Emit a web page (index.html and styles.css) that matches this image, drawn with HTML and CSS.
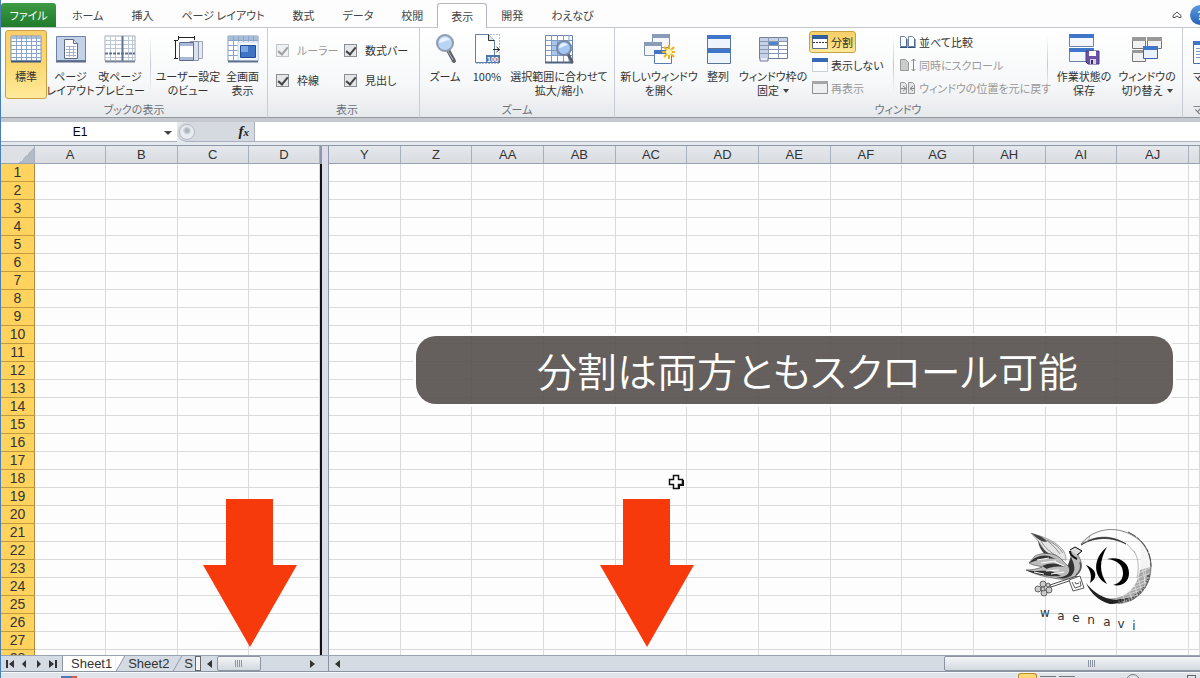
FILE: index.html
```
<!DOCTYPE html>
<html lang="ja">
<head>
  <meta charset="UTF-8" />
  <meta name="viewport" content="width=device-width, initial-scale=1.0"/>
  <title>分割は両方ともスクロール可能</title>
  <link rel="stylesheet" href="styles.css">
</head>
<body>

  <!-- Tabs -->
  <nav class="tabs">
    <button class="tab file">ファイル</button>
    <button class="tab">ホーム</button>
    <button class="tab">挿入</button>
    <button class="tab">ページ レイアウト</button>
    <button class="tab">数式</button>
    <button class="tab">データ</button>
    <button class="tab">校閲</button>
    <button class="tab active">表示</button>
    <button class="tab">開発</button>
    <button class="tab">わえなび</button>
    <div class="tab-tools">
      <button class="tool" aria-label="リボンの最小化">
        <svg width="10" height="8" viewBox="0 0 10 8"><path d="M1 4.500 5 1l4 3.500v2H7L5 5 3 6.500H1z" fill="#fff" stroke="#555" stroke-width="1"/></svg>
      </button>
      <button class="tool help" aria-label="ヘルプ">?</button>
    </div>
  </nav>

  <!-- Ribbon -->
  <div class="ribbon">
    <section class="group book">
      <div class="items">
        <button class="big on">
          <svg class="icon" viewBox="0 0 32 32">
            <path d="M1 3h30v25H1z" fill="#fff" stroke="#7d93b4"/>
            <path d="M1 3h30v3H1z" fill="#a9bcd8"/>
            <path d="M6.500 3v25M11.500 3v25M16.500 3v25M21.500 3v25M26.500 3v25M1 8.500h30M1 12.500h30M1 16.500h30M1 20.500h30M1 24.500h30" stroke="#8ba6cc"/>
            <path d="M1 28.500h30" stroke="#3f557a" stroke-width="2"/>
          </svg>
          <span>標準</span>
        </button>
        <button class="big">
          <svg class="icon" viewBox="0 0 32 32">
            <path d="M1.500 3.500h29v24h-29z" fill="#c3d2e8" stroke="#6c83a8"/>
            <path d="M9.500 6.500h9l4 4v15h-13z" fill="#fff" stroke="#5b6b85"/>
            <path d="M18.500 6.500v4h4" fill="#dfe7f2" stroke="#5b6b85"/>
            <path d="M11 13.500h10M11 16.500h10M11 19.500h10M11 22.500h10M14.500 13v11M18.500 13v11" stroke="#a3b2c9"/>
            <path d="M1 28.500h30" stroke="#5b6b85" stroke-width="2"/>
          </svg>
          <span>ページ<br>レイアウト</span>
        </button>
        <button class="big">
          <svg class="icon" viewBox="0 0 32 32">
            <path d="M1 3h30v25H1z" fill="#fff" stroke="#a2acb9"/>
            <path d="M6.500 3v25M11.500 3v25M24.500 3v25M28.500 3v25M1 7.500h30M1 11.500h30M1 15.500h30M1 24.500h30" stroke="#bcc7d6"/>
            <path d="M18.500 3v25" stroke="#5f7291" stroke-width="2"/>
            <path d="M1 20.500h30" stroke="#5f7291" stroke-width="2" stroke-dasharray="3 1"/>
            <path d="M1 28.500h30" stroke="#7b889c" stroke-width="2"/>
          </svg>
          <span>改ページ<br>プレビュー</span>
        </button>
        <i class="sep"></i>
        <button class="big">
          <svg class="icon" viewBox="0 0 32 32">
            <path d="M22 8.500h8.500v17H22z" fill="#e6ebf3" stroke="#a3aabb"/>
            <path d="M18 8.500h8.500v19H18z" fill="#dbe1ec" stroke="#8d96ab"/>
            <path d="M7.500 9.500h14v18h-14z" fill="#fff" stroke="#5e6c8c"/>
            <path d="M8 10h13v3H8zM8 24h13v3H8z" fill="#a9b8d6"/>
            <path d="M6 4.500h17M6.500 3v4M22.500 3v4M3.500 8v17M2 7.500h4M2 25.500h4" stroke="#222" fill="none"/>
          </svg>
          <span>ユーザー設定<br>のビュー</span>
        </button>
        <button class="big">
          <svg class="icon" viewBox="0 0 32 32">
            <path d="M1 3h30v25H1z" fill="#fff" stroke="#8499bb"/>
            <path d="M1 3h30v4H1z" fill="#a9bcd8"/>
            <path d="M6.500 3v25M11.500 3v25M16.500 3v25M21.500 3v25M26.500 3v25M1 7.500h30M1 12.500h30M1 17.500h30M1 22.500h30" stroke="#8ba6cc"/>
            <path d="M11 9h20v19H11z" fill="#f2f6fb" stroke="#cfd9e8"/>
            <path d="M13.500 12.500h15v12h-15z" fill="#3f73c4" stroke="#234f96"/>
            <path d="M14 13h7v6h-7z" fill="#7ba4e2"/>
            <path d="M1 28.500h30" stroke="#5c7091" stroke-width="2"/>
          </svg>
          <span>全画面<br>表示</span>
        </button>
      </div>
      <h2>ブックの表示</h2>
    </section>

    <section class="group show">
      <div class="items">
        <label class="check off"><input type="checkbox" checked disabled>ルーラー</label>
        <label class="check"><input type="checkbox" checked>数式バー</label>
        <label class="check"><input type="checkbox" checked>枠線</label>
        <label class="check"><input type="checkbox" checked>見出し</label>
      </div>
      <h2>表示</h2>
    </section>

    <section class="group zoom">
      <div class="items">
        <button class="big">
          <svg class="icon" viewBox="0 0 32 32">
            <path d="M19 17l6 11" stroke="#5d6470" stroke-width="4" stroke-linecap="round"/>
            <path d="M19 18l5 9" stroke="#a9afb9" stroke-width="1"/>
            <circle cx="16" cy="10" r="8" fill="#b9d4f3" stroke="#8e9bb0" stroke-width="2"/>
            <path d="M10 10a6 6 0 0 1 11-3c-4 0-8 3-11 3z" fill="#eaf4ff"/>
          </svg>
          <span>ズーム</span>
        </button>
        <button class="big">
          <svg class="icon" viewBox="0 0 32 32">
            <path d="M4.500 1.500h24v29h-24z" fill="none" stroke="#5c80ad" stroke-dasharray="1 2"/>
            <path d="M4.500 1.500h13l6 6v22h-19z" fill="#fff" stroke="#6481a8"/>
            <path d="M17.500 1.500v6h6" fill="#d9e4f2" stroke="#333"/>
            <path d="M22 16.500h6M25.500 14l3 2.500-3 2.500" stroke="#222" fill="none"/>
            <path d="M15 22h14v8H15z" fill="#4f76a8"/>
            <text x="16" y="29" font-family="Liberation Sans, sans-serif" font-size="7" font-weight="bold" fill="#fff">100</text>
          </svg>
          <span>100%</span>
        </button>
        <button class="big">
          <svg class="icon" viewBox="0 0 32 32">
            <path d="M2.500 2.500h27v27h-27z" fill="#fff" stroke="#6f86a8"/>
            <path d="M8.500 7h16v16h-16z" fill="#a9c6ee"/>
            <path d="M8.500 2v27M14.500 2v27M20.500 2v27M26 2v27M3 7.500h26M3 12.500h26M3 17.500h26M3 22.500h26" stroke="#7d9bc6"/>
            <path d="M2 29.500h28" stroke="#51637f" stroke-width="2"/>
            <path d="M25 21l4 8" stroke="#5b5f68" stroke-width="3" stroke-linecap="round"/>
            <circle cx="21" cy="15" r="7" fill="#a3c6f2" stroke="#7587a5" stroke-width="2"/>
            <path d="M16 15a5 5 0 0 1 9-3c-3 0-6 3-9 3z" fill="#e4f1ff"/>
          </svg>
          <span>選択範囲に合わせて<br>拡大/縮小</span>
        </button>
      </div>
      <h2>ズーム</h2>
    </section>

    <section class="group window">
      <div class="items">
        <button class="big">
          <svg class="icon" viewBox="0 0 32 32">
            <path d="M9.500 1.500h17v13h-17z" fill="#f4f6fa" stroke="#8090ab"/>
            <path d="M9 1h18v4H9z" fill="#8a9bb8"/>
            <path d="M1.500 9.500h17v13h-17z" fill="#f4f6fa" stroke="#8090ab"/>
            <path d="M1 9h18v4H1z" fill="#8a9bb8"/>
            <path d="M11.500 17.500h17v13h-17z" fill="#fff" stroke="#5b7dae"/>
            <path d="M11 17h18v4H11z" fill="#3f76c9"/>
            <path d="M26 12v14M19 19h14M21 14l10 10M31 14L21 24" stroke="#f0b21c" stroke-width="2"/>
            <circle cx="26" cy="19" r="3" fill="#fff3b8"/>
          </svg>
          <span>新しいウィンドウ<br>を開く</span>
        </button>
        <button class="big">
          <svg class="icon" viewBox="0 0 32 32">
            <path d="M5.500 2.500h23v28h-23z" fill="#eef4fb" stroke="#5b7399"/>
            <path d="M5 2h24v4H5zM5 16h24v4H5z" fill="#3f76c9"/>
            <path d="M5 15.500h24" stroke="#5b7399"/>
          </svg>
          <span>整列</span>
        </button>
        <button class="big">
          <svg class="icon" viewBox="0 0 32 32">
            <path d="M2.500 4.500h28v21h-28z" fill="#fff" stroke="#6f7f99"/>
            <path d="M3 5h27v4H3zM3 5h8v22H3z" fill="#c5d2e6"/>
            <path d="M11 9h10v4H11z" fill="#4e84d0"/>
            <path d="M11.500 4v21M21.500 4v21M3 8.500h27M3 12.500h27M3 16.500h27M3 20.500h27" stroke="#8998b1"/>
            <path d="M3 25v3h8v-3" fill="#e8edf5" stroke="#6f7f99"/>
          </svg>
          <span>ウィンドウ枠の<br>固定<b class="drop"></b></span>
        </button>
        <div class="stack">
          <button class="small on">
            <svg width="16" height="14" viewBox="0 0 16 14"><path d="M.5.5h15v13H.5z" fill="#fff" stroke="#5a6d8c"/><path d="M0 0h16v4H0z" fill="#2f5f9f"/><path d="M1 7.500h14" stroke="#333" stroke-dasharray="2 1"/></svg>
            <span>分割</span>
          </button>
          <button class="small">
            <svg width="16" height="14" viewBox="0 0 16 14"><path d="M.5 1.500h15v12H.5z" fill="#fff" stroke="#98a6bd" stroke-dasharray="1 1"/><path d="M0 0h16v4H0z" fill="#3568b5"/></svg>
            <span>表示しない</span>
          </button>
          <button class="small" disabled>
            <svg width="16" height="14" viewBox="0 0 16 14"><path d="M.5.5h15v12H.5z" fill="#efefef" stroke="#8e8e8e"/><path d="M0 0h16v3H0z" fill="#a6a6a6"/></svg>
            <span>再表示</span>
          </button>
        </div>
        <i class="sep"></i>
        <div class="stack">
          <button class="small">
            <svg width="16" height="14" viewBox="0 0 16 14"><path d="M.5 1.500h4l2 2v8h-6zM8.500 1.500h4l2 2v8h-6z" fill="#fff" stroke="#6b82a6"/><path d="M0 12.500h7M8 12.500h7M7 4v9M15 4v9" stroke="#31507f"/></svg>
            <span>並べて比較</span>
          </button>
          <button class="small" disabled>
            <svg width="16" height="14" viewBox="0 0 16 14"><path d="M.5 1.500h5l3 3v8h-8z" fill="#ccc" stroke="#999"/><path d="M13.500 1v12M11.500 3l2-2 2 2M11.500 11l2 2 2-2" stroke="#888" fill="none"/></svg>
            <span>同時にスクロール</span>
          </button>
          <button class="small" disabled>
            <svg width="16" height="14" viewBox="0 0 16 14"><path d="M.5 1.500h4l2 2v9h-6zM8.500 1.500h4l2 2v9h-6z" fill="#e6e6e6" stroke="#999"/><path d="M1 7.500h5M3 5l3 2.500L3 10M15 7.500h-5M13 5l-3 2.500 3 2.500" stroke="#888" fill="none"/></svg>
            <span>ウィンドウの位置を元に戻す</span>
          </button>
        </div>
        <i class="sep"></i>
        <button class="big">
          <svg class="icon" viewBox="0 0 32 32">
            <path d="M1.500 1.500h24v12h-24zM1.500 15.500h24v13h-24z" fill="#f3f7fc" stroke="#6b82a6"/>
            <path d="M1 1h25v4H1zM1 15h25v4H1z" fill="#3f76c9"/>
            <path d="M18 18h13v13H20l-2-2z" fill="#6a52a5" stroke="#4a3a80"/>
            <path d="M21 18h7v5h-7z" fill="#fff"/>
            <path d="M22 26h6v5h-6z" fill="#d6d0ea"/>
            <path d="M23 27h2v4h-2z" fill="#39306b"/>
          </svg>
          <span>作業状態の<br>保存</span>
        </button>
        <button class="big">
          <svg class="icon" viewBox="0 0 32 32">
            <path d="M1.500 4.500h13v11h-13zM16.500 4.500h14v11h-14zM1.500 17.500h13v11h-13z" fill="#f2f2f2" stroke="#777"/>
            <path d="M1 4h14v4H1zM16 4h15v4H16zM1 17h14v3H1z" fill="#999"/>
            <path d="M12.500 13.500h14v12h-14z" fill="#e8f1fd" stroke="#3a66a8"/>
            <path d="M12 13h15v4H12z" fill="#3f76c9"/>
          </svg>
          <span>ウィンドウの<br>切り替え<b class="drop"></b></span>
        </button>
      </div>
      <h2>ウィンドウ</h2>
    </section>

    <section class="group macro">
      <div class="items">
        <button class="big">
          <svg class="icon" viewBox="0 0 32 32">
            <path d="M1.500 8.500h28v22h-28z" fill="#fff" stroke="#4f6e9c"/>
            <path d="M1 8h29v4H1z" fill="#3f76c9"/>
            <path d="M4 15.500h12M4 18.500h12M4 21.500h12M4 24.500h12" stroke="#7d9bc6"/>
          </svg>
          <span>マクロ</span>
        </button>
      </div>
      <h2>マクロ</h2>
    </section>
  </div>

  <!-- Formula bar -->
  <div class="formula-bar">
    <input class="name-box" type="text" value="E1" aria-label="名前ボックス">
    <button class="name-drop" aria-label="名前の一覧"><b class="drop"></b></button>
    <div class="fx-area">
      <i class="knob"></i>
      <button class="fx" aria-label="関数の挿入">f<small>x</small></button>
    </div>
    <input class="formula" type="text" aria-label="数式バー">
  </div>

  <!-- Sheet -->
  <main class="sheet">
    <div class="pane left">
      <table id="left-grid"></table>
    </div>
    <div class="splitter"></div>
    <div class="pane right">
      <table id="right-grid"></table>
    </div>

    <svg class="arrow first" viewBox="0 0 94 148"><path d="M23 0h47v66h24L47 148 0 66h23z" fill="#f73a0c"/></svg>
    <svg class="arrow second" viewBox="0 0 94 148"><path d="M23 0h47v66h24L47 148 0 66h23z" fill="#f73a0c"/></svg>
    <p class="caption">分割は両方ともスクロール可能</p>
    <svg class="cursor" viewBox="0 0 16 16"><path d="M5.500 1.500h5v4h4v5h-4v4h-5v-4h-4v-5h4z" fill="#fff" stroke="#111" stroke-width="1.500"/><path d="M11 15v-4h4V6" fill="none" stroke="#111" stroke-width="2"/></svg>

    <svg class="logo" viewBox="0 0 130 104">
      <!-- ring -->
      <path d="M63 57c8 10 20 18 33 18 18-2 31-18 31-37 0-12-5-22-12-28 2 10 4 18 0 34-3 14-15 25-31 25-8 0-14-5-21-12z" fill="#f4f4f4"/>
      <path d="M127 38c0 20-13 35-31 37-9 0-17-3-23-8 14 5 27 2 35-7 5-6 7-13 8-19z" fill="#a8a8a8"/>
      <path d="M62 54c7 9 17 16 30 17l14-3c-7 5-13 7-20 7-11-3-19-10-24-21z" fill="#222"/>
      <path d="M94 73c15-1 29-12 31-28" fill="none" stroke="#555" stroke-width="3" stroke-dasharray="2 1"/>
      <path d="M115 44l11-5M114 49l12-5M112 54l13-5M109 58l14-5M106 62l15-5M101 66l17-5M97 70l17-4M118 36l4 22M122 34l-2 28M114 48l4 16M110 55l4 13M105 60l3 12M99 66l2 8" stroke="#eee" stroke-width=".6"/>
      <path d="M57 15C67 2 84-2 98 2c18 5 29 19 29 36 0 15-9 28-21 34" fill="none" stroke="#666" stroke-width=".8"/>
      <path d="M104 3c15 7 23 19 23 35" fill="none" stroke="#444" stroke-width="1" stroke-dasharray="9 1 4 1"/>
      <path d="M57 16C67 8 85 4 102 15C88 8 72 7 57 16z" fill="#333" stroke="#333" stroke-width=".8"/>
      <path d="M58 14l8-7-2 5zM103 15l8 9M110 22c5 8 5 18 3 27" fill="none" stroke="#999" stroke-width=".7"/>
      <!-- mark -->
      <path d="M62 36c10 4 13 12 4 18 2-6 1-12-4-18z" fill="#000"/>
      <path d="M83 18c-15 12-14 30 0 37-8-12-8-23 0-37z" fill="#000"/>
      <path d="M83 30c13-3 22 4 22 14 0 9-7 14-16 12 7-2 10-6 10-12 0-8-6-13-16-14z" fill="#000"/>
      <!-- bird -->
      <path d="M7 4l12 4c8 3 15 7 20 13 2 3 3 6 3 10-9-1-18-4-22-10-2-3-3-6-6-9z" fill="#e4e4e4" stroke="#777" stroke-width=".6"/>
      <path d="M7 4l9 3c4 2 6 4 7 6-6 0-9-3-16-9zM14 11c4 9 9 14 20 17l-2 2c-10-2-17-8-18-19z" fill="#444"/>
      <path d="M19 9c7 4 12 9 17 16M23 11c7 3 12 7 16 13M17 12c4 7 9 11 16 15" fill="none" stroke="#777" stroke-width=".8"/>
      <path d="M5 34l6-7c8-4 18-3 24 1l9 9 3-9-1-4c1-4 3-6 7-5l5 3-4 4c3 5 5 11 2 16-4 7-13 9-21 8-14-2-22-4-33-9 6 0 11-1 16-3-5-2-9-1-13-4z" fill="#bcbcbc" stroke="#444" stroke-width=".6"/>
      <path d="M5 34c5-6 13-9 20-7l7 3c-7-1-16 0-21 2zM2 41c10 2 17 0 25 1l10 5c-12 1-25-1-35-6z" fill="#333"/>
      <path d="M18 37c8-4 16-3 23 1-6-1-15 0-18 2zM47 28c4 8 5 14 0 19-5 3-10 3-15 1 10 1 16-4 12-11z" fill="#333"/>
      <path d="M13 31l12-2M17 34l15-2M22 42l13-1M27 45l13-2M10 43l10 2M31 33l9 4" stroke="#fff" stroke-width="1"/>
      <path d="M46 21l5-3 7 4-5 4" fill="#ddd" stroke="#111" stroke-width="1"/>
      <path d="M46 22c0 4 3 6 7 8" fill="none" stroke="#111" stroke-width="2"/>
      <path d="M52 46c4-3 6-7 4-13" fill="none" stroke="#555" stroke-width="1.500"/>
      <!-- key -->
      <path d="M26 56l27-9 1 2-27 9z" fill="#fff" stroke="#222" stroke-width=".8"/>
      <path d="M45 51l11-4 4 12-11 3z" fill="#fff" stroke="#333" stroke-width=".8"/>
      <path d="M48 53l3 6 6-2-1-5M51 53l1 2 3-1" fill="none" stroke="#333" stroke-width=".8"/>
      <g fill="#ccc" stroke="#444" stroke-width=".8">
        <circle cx="19" cy="55" r="3"/><circle cx="14" cy="60" r="3"/><circle cx="20" cy="64" r="3"/><circle cx="25" cy="61" r="3"/><circle cx="24" cy="56" r="2"/><circle cx="19" cy="60" r="2"/>
      </g>
      <text class="logo-text" x="21 37 52 67 83 97 110" y="88 91 93 95 97 99 101">waenavi</text>
    </svg>
  </main>

  <!-- Sheet tabs and scroll bars -->
  <footer class="sheet-bar">
    <div class="bar-left">
      <div class="nav-buttons">
        <button aria-label="最初のシート"><svg width="8" height="8" viewBox="0 0 8 8"><path d="M0 0h2v8H0zM8 0v8L3 4z"/></svg></button>
        <button aria-label="前のシート"><svg width="8" height="8" viewBox="0 0 8 8"><path d="M6 0v8L2 4z"/></svg></button>
        <button aria-label="次のシート"><svg width="8" height="8" viewBox="0 0 8 8"><path d="M2 0v8l4-4z"/></svg></button>
        <button aria-label="最後のシート"><svg width="8" height="8" viewBox="0 0 8 8"><path d="M6 0h2v8H6zM0 0v8l5-4z"/></svg></button>
      </div>
      <div class="sheet-tabs">
        <button class="sheet-tab current">Sheet1</button>
        <svg class="slant" viewBox="0 0 10 16"><path d="M0 0h10L1 16H0z" fill="#fff"/><path d="M10 0 1 16" stroke="#8c94a1" fill="none"/></svg>
        <button class="sheet-tab">Sheet2</button>
        <svg class="slant" viewBox="0 0 10 16"><path d="M10 0 1 16" stroke="#8c94a1" fill="none"/></svg>
        <button class="sheet-tab cut">S</button>
        <i class="handle"></i>
      </div>
      <div class="scroll">
        <button class="scroll-btn" aria-label="左へ"><svg width="6" height="8" viewBox="0 0 6 8"><path d="M6 0v8L1 4z"/></svg></button>
        <div class="track"><div class="thumb"><i class="grip"></i></div></div>
        <button class="scroll-btn" aria-label="右へ"><svg width="6" height="8" viewBox="0 0 6 8"><path d="M0 0v8l5-4z"/></svg></button>
      </div>
    </div>
    <div class="bar-split"></div>
    <div class="scroll wide">
      <button class="scroll-btn" aria-label="左へ"><svg width="6" height="8" viewBox="0 0 6 8"><path d="M6 0v8L1 4z"/></svg></button>
      <div class="track"><div class="thumb"><i class="grip"></i></div></div>
    </div>
  </footer>

  <div class="status-bar">
    <i class="macro-mark"></i>
    <div class="views"><i class="view on"></i><i class="view"></i><i class="view"></i><i class="zoom-out"></i><i class="zoom-knob"></i></div>
  </div>

  <script>
    const ROWS = 28;

    function buildGrid(id, columns, withRowNumbers, withTail) {
      const table = document.getElementById(id);
      const corner = withRowNumbers ? '<th class="corner"></th>' : "";
      const tailHead = withTail ? '<th class="tail"></th>' : "";
      const tailCell = withTail ? "<td></td>" : "";
      let html = "<thead><tr>" + corner + columns.map(c => `<th scope="col">${c}</th>`).join("") + tailHead + "</tr></thead><tbody>";

      for (let row = 1; row <= ROWS; row++) {
        const number = withRowNumbers ? `<th scope="row">${row}</th>` : "";
        html += "<tr>" + number + "<td></td>".repeat(columns.length) + tailCell + "</tr>";
      }
      table.innerHTML = html + "</tbody>";
    }

    buildGrid("left-grid", ["A", "B", "C", "D"], true, false);
    buildGrid("right-grid", ["Y", "Z", "AA", "AB", "AC", "AD", "AE", "AF", "AG", "AH", "AI", "AJ"], false, true);
  </script>
</body>
</html>
```
FILE: styles.css
```
* { box-sizing: border-box; }

body {
  margin: 0;
  height: 100vh;
  display: flex;
  flex-direction: column;
  overflow: hidden;
  border-left: 1px solid #4a7fb5;
  background-color: #fdfdfd;
  color: #333;
  font-family: "Noto Sans CJK JP", sans-serif;
  font-size: 11px;
  line-height: 14px;
  font-feature-settings: "palt";
}

button {
  margin: 0;
  padding: 0;
  border: none;
  background: none;
  color: inherit;
  font: inherit;
  font-feature-settings: inherit;
  cursor: pointer;
}

svg { display: block; }

/* tabs */
.tabs {
  display: flex;
  align-items: stretch;
  flex: none;
  height: 28px;
  padding-top: 3px;
  border-bottom: 1px solid #c3c7cc;
}

.tab {
  flex: none;
  padding: 0 14px;
  white-space: nowrap;
  color: #444;
}

.tab.file {
  width: 55px;
  margin-right: 2px;
  padding: 0;
  border-radius: 3px 3px 0 0;
  background: linear-gradient(#3f9a43, #1f7a2b);
  color: #fff;
}

.tab.active {
  margin-bottom: -1px;
  padding: 0 13px;
  border: 1px solid #b4b8be;
  border-bottom: none;
  border-radius: 3px 3px 0 0;
  background-color: #fff;
}

.tab-tools {
  display: flex;
  align-items: center;
  gap: 8px;
  margin-left: auto;
  margin-right: -10px;
}

.help {
  width: 20px;
  height: 20px;
  border-radius: 50%;
  background: linear-gradient(#5d9ae0, #2a62b5);
  color: #fff;
  font-weight: bold;
}

/* ribbon */
.ribbon {
  display: flex;
  flex: none;
  height: 94px;
  overflow: hidden;
  border-bottom: 4px solid #c5c9ce;
  background: linear-gradient(#fff, #f7f8f9 60%, #e6e9ec);
}

.group {
  display: flex;
  flex-direction: column;
  flex: none;
  padding: 2px 4px 0;
  border-right: 1px solid #c9cdd3;
  border-bottom: 1px solid #9298a0;
}

.group h2 {
  margin: 3px 0 0;
  text-align: center;
  font-size: 11px;
  font-weight: normal;
  color: #6d727c;
}

.items {
  display: grid;
  height: 69px;
}

.book .items { grid-template-columns: 42px 47px 52px 8px 68px 41px; }
.show .items { grid-template-columns: 68px 74px; }
.zoom .items { grid-template-columns: 42px 42px 102px; }
.window .items { grid-template-columns: 80px 38px 72px 80px 8px 146px 8px 66px 60px; }
.macro .items { grid-template-columns: 42px; }
.window { padding-right: 5px; }

.show {
  padding-left: 8px;
  padding-right: 1px;
}

.big {
  display: flex;
  flex-direction: column;
  align-items: center;
  gap: 4px;
  padding-top: 2px;
  border: 1px solid transparent;
  border-radius: 3px;
  white-space: nowrap;
}

.icon {
  flex: none;
  width: 32px;
  height: 32px;
}

.big.on,
.small.on {
  border-color: #c9a04a;
  background: linear-gradient(#f9cf6b, #fbd873 50%, #ffe99a);
}

.sep {
  justify-self: center;
  width: 1px;
  margin: 6px 0;
  background: linear-gradient(transparent, #c5c9cf, transparent);
}

.drop {
  display: inline-block;
  margin-left: 4px;
  border: 3px solid transparent;
  border-top: 4px solid #444;
  border-bottom: none;
  vertical-align: 2px;
}

.stack {
  display: flex;
  flex-direction: column;
  align-items: flex-start;
  gap: 1px;
  padding-top: 1px;
}

.small {
  display: flex;
  align-items: center;
  gap: 3px;
  height: 22px;
  padding: 0 2px;
  border: 1px solid transparent;
  border-radius: 3px;
  white-space: nowrap;
}

.small:disabled { color: #999; }

.check {
  display: flex;
  align-items: center;
  gap: 8px;
  white-space: nowrap;
}

.check.off { color: #999; }

.show .items {
  height: 60px;
  margin-top: 5px;
  margin-bottom: 4px;
}

.check input {
  appearance: none;
  display: flex;
  justify-content: center;
  flex: none;
  width: 13px;
  height: 13px;
  margin: 0;
  border: 1px solid #8a8f96;
  background-color: #e4e6e8;
}

.check input::after {
  content: "";
  width: 4px;
  height: 8px;
  border-right: 2px solid #444;
  border-bottom: 2px solid #444;
  transform: rotate(40deg);
}

.check.off input {
  opacity: 0.5;
}

/* formula bar */
.formula-bar {
  display: flex;
  flex: none;
  height: 24px;
  padding-bottom: 3px;
  border-bottom: 1px solid #8e98aa;
  background-color: #e4e9ee;
}

.formula-bar input {
  min-width: 0;
  border: none;
  border-bottom: 1px solid #a9b1c0;
  background-color: #fff;
  font-family: "Liberation Sans", sans-serif;
  font-size: 12px;
  outline: none;
}

.name-box {
  width: 158px;
  padding: 0;
  text-align: center;
}

.name-drop {
  width: 18px;
  border-bottom: 1px solid #a9b1c0;
  background-color: #fff;
}

.name-drop .drop {
  margin: 0;
  border-width: 4px 4px 0;
}

.fx-area {
  display: flex;
  align-items: center;
  justify-content: space-between;
  width: 78px;
  padding: 0 5px 0 2px;
  border-right: 1px solid #a9b1c0;
  border-bottom: 1px solid #a9b1c0;
  border-radius: 10px 0 0 10px;
  background-color: #d5dae0;
}

.knob {
  width: 16px;
  height: 16px;
  border: 1px solid #b3b9c2;
  border-radius: 50%;
  background: radial-gradient(circle at 50% 40%, #aeb4bc 15%, #e8ebef 40%);
}

.fx {
  font: italic bold 15px "Liberation Serif", serif;
  color: #222;
}

.fx small { font-size: 11px; }

.formula { flex: 1; }

/* cells */
.sheet {
  position: relative;
  display: flex;
  flex: 1;
  min-height: 0;
  overflow: hidden;
}

.pane {
  overflow: hidden;
  background-color: #fdfdfd;
}

.pane.left {
  flex: none;
  width: 319px;
}

.pane.right {
  flex: 1;
  min-width: 0;
}

.pane table {
  width: 100%;
  table-layout: fixed;
  border-collapse: separate;
  border-spacing: 0;
  font-family: "Liberation Sans", sans-serif;
  font-size: 13px;
  line-height: 17px;
}

.pane th,
.pane td {
  height: 18px;
  padding: 0;
  border-right: 1px solid #d9dadc;
  border-bottom: 1px solid #d9dadc;
}

.pane th {
  font-weight: normal;
  color: #333;
}

.pane thead th {
  border-right-color: #a9b0bd;
  border-bottom-color: #98a1b3;
  background: linear-gradient(#e4e8ec, #d9dde2);
}

.pane tbody th {
  border-right-color: #b08a3a;
  border-bottom-color: #c39b3f;
  background-color: #ffd35e;
  font-size: 14px;
}

.pane thead .corner {
  width: 34px;
  background: linear-gradient(135deg, #dde1e6 70%, #b2bac6 70%);
}

.pane .tail { width: 11px; }

.splitter {
  display: flex;
  flex-direction: column;
  flex: none;
  width: 9px;
  border-right: 1px solid #8e98aa;
  background-color: #dcdde8;
}

.splitter::before {
  content: "";
  width: 2px;
  height: 18px;
  background-color: #8e98aa;
}

.splitter::after {
  content: "";
  flex: 1;
  width: 2px;
  background-color: #111;
}

/* overlays */
.arrow {
  position: absolute;
  top: 353px;
  width: 94px;
  height: 148px;
}

.arrow.first { left: 202px; }
.arrow.second { left: 599px; }

.caption {
  position: absolute;
  top: 190px;
  left: 415px;
  right: 27px;
  margin: 0;
  padding-left: 26px;
  border-radius: 20px;
  background-color: rgba(84, 79, 75, 0.9);
  box-shadow: 0 0 0 3px #fdfdfd;
  color: #fff;
  text-align: center;
  white-space: nowrap;
  font-size: 40px;
  font-weight: 350;
  line-height: 68px;
}

.cursor {
  position: absolute;
  top: 328px;
  left: 667px;
  width: 16px;
  height: 16px;
}

.logo {
  position: absolute;
  top: 383px;
  right: 46px;
  width: 130px;
  height: 104px;
}

.logo-text {
  font-family: "DejaVu Sans", sans-serif;
  font-size: 12px;
  text-anchor: middle;
  fill: #333;
}

/* sheet bar */
.sheet-bar {
  display: flex;
  flex: none;
  height: 17px;
  border-top: 1px solid #9aa3b0;
  border-bottom: 1px solid #8c94a1;
  background-color: #d5dbe2;
  fill: #333;
}

.bar-left {
  display: flex;
  flex: none;
  width: 320px;
}

.nav-buttons {
  display: flex;
  align-items: center;
  justify-content: space-between;
  width: 62px;
  padding: 0 5px;
  border-right: 1px solid #8c94a1;
}

.sheet-tabs {
  display: flex;
  width: 138px;
}

.sheet-tab {
  flex: none;
  padding: 0 3px;
  font-family: "Liberation Sans", sans-serif;
  font-size: 13px;
}

.sheet-tab.current {
  padding-left: 8px;
  background-color: #fff;
}

.sheet-tab.cut {
  flex: 1;
  min-width: 0;
  padding: 0;
}

.slant {
  flex: none;
  width: 10px;
}

.handle {
  flex: none;
  width: 6px;
  border: 1px solid #666;
  background-color: #f2f4f6;
}

.scroll {
  display: flex;
  flex: 1;
  min-width: 0;
}

.scroll-btn {
  display: flex;
  align-items: center;
  justify-content: center;
  flex: none;
  width: 16px;
}

.track {
  flex: 1;
  display: flex;
  min-width: 0;
}

.thumb {
  display: flex;
  align-items: center;
  justify-content: center;
  flex: none;
  width: 44px;
  border: 1px solid #8c94a1;
  border-radius: 2px;
  background: linear-gradient(#f3f5f7, #d3d9e0);
}

.wide .track { justify-content: flex-end; }

.wide .thumb {
  width: 296px;
  margin-right: -40px;
}

.grip {
  width: 8px;
  height: 7px;
  background: repeating-linear-gradient(90deg, #8c94a1 0 1px, transparent 1px 2px);
}

.bar-split {
  flex: none;
  width: 8px;
  border-right: 1px solid #8c94a1;
}

/* status bar */
.status-bar {
  display: flex;
  align-items: flex-end;
  justify-content: space-between;
  flex: none;
  height: 6px;
  padding: 0 4px 0 60px;
  border-top: 1px solid #f7f8fa;
  background-color: #dfe4ea;
}

.macro-mark {
  width: 16px;
  height: 2px;
  background: linear-gradient(90deg, #4a78c0 70%, #d55b4a 70%);
}

.views {
  display: flex;
  gap: 3px;
  height: 5px;
}

.view {
  width: 16px;
  margin-top: 3px;
  border-top: 1px solid #777;
}

.view.on {
  width: 19px;
  margin-top: 0;
  border: 1px solid #b98c2c;
  border-bottom: none;
  border-radius: 3px 3px 0 0;
  background-color: #ffd978;
}

.zoom-out {
  width: 14px;
  height: 14px;
  margin: 1px 0 0 48px;
  border: 1px solid #777;
  border-radius: 50%;
}

.zoom-knob {
  width: 9px;
  margin: 2px 0 0 44px;
  border: 1px solid #666;
  border-bottom: none;
}
```
